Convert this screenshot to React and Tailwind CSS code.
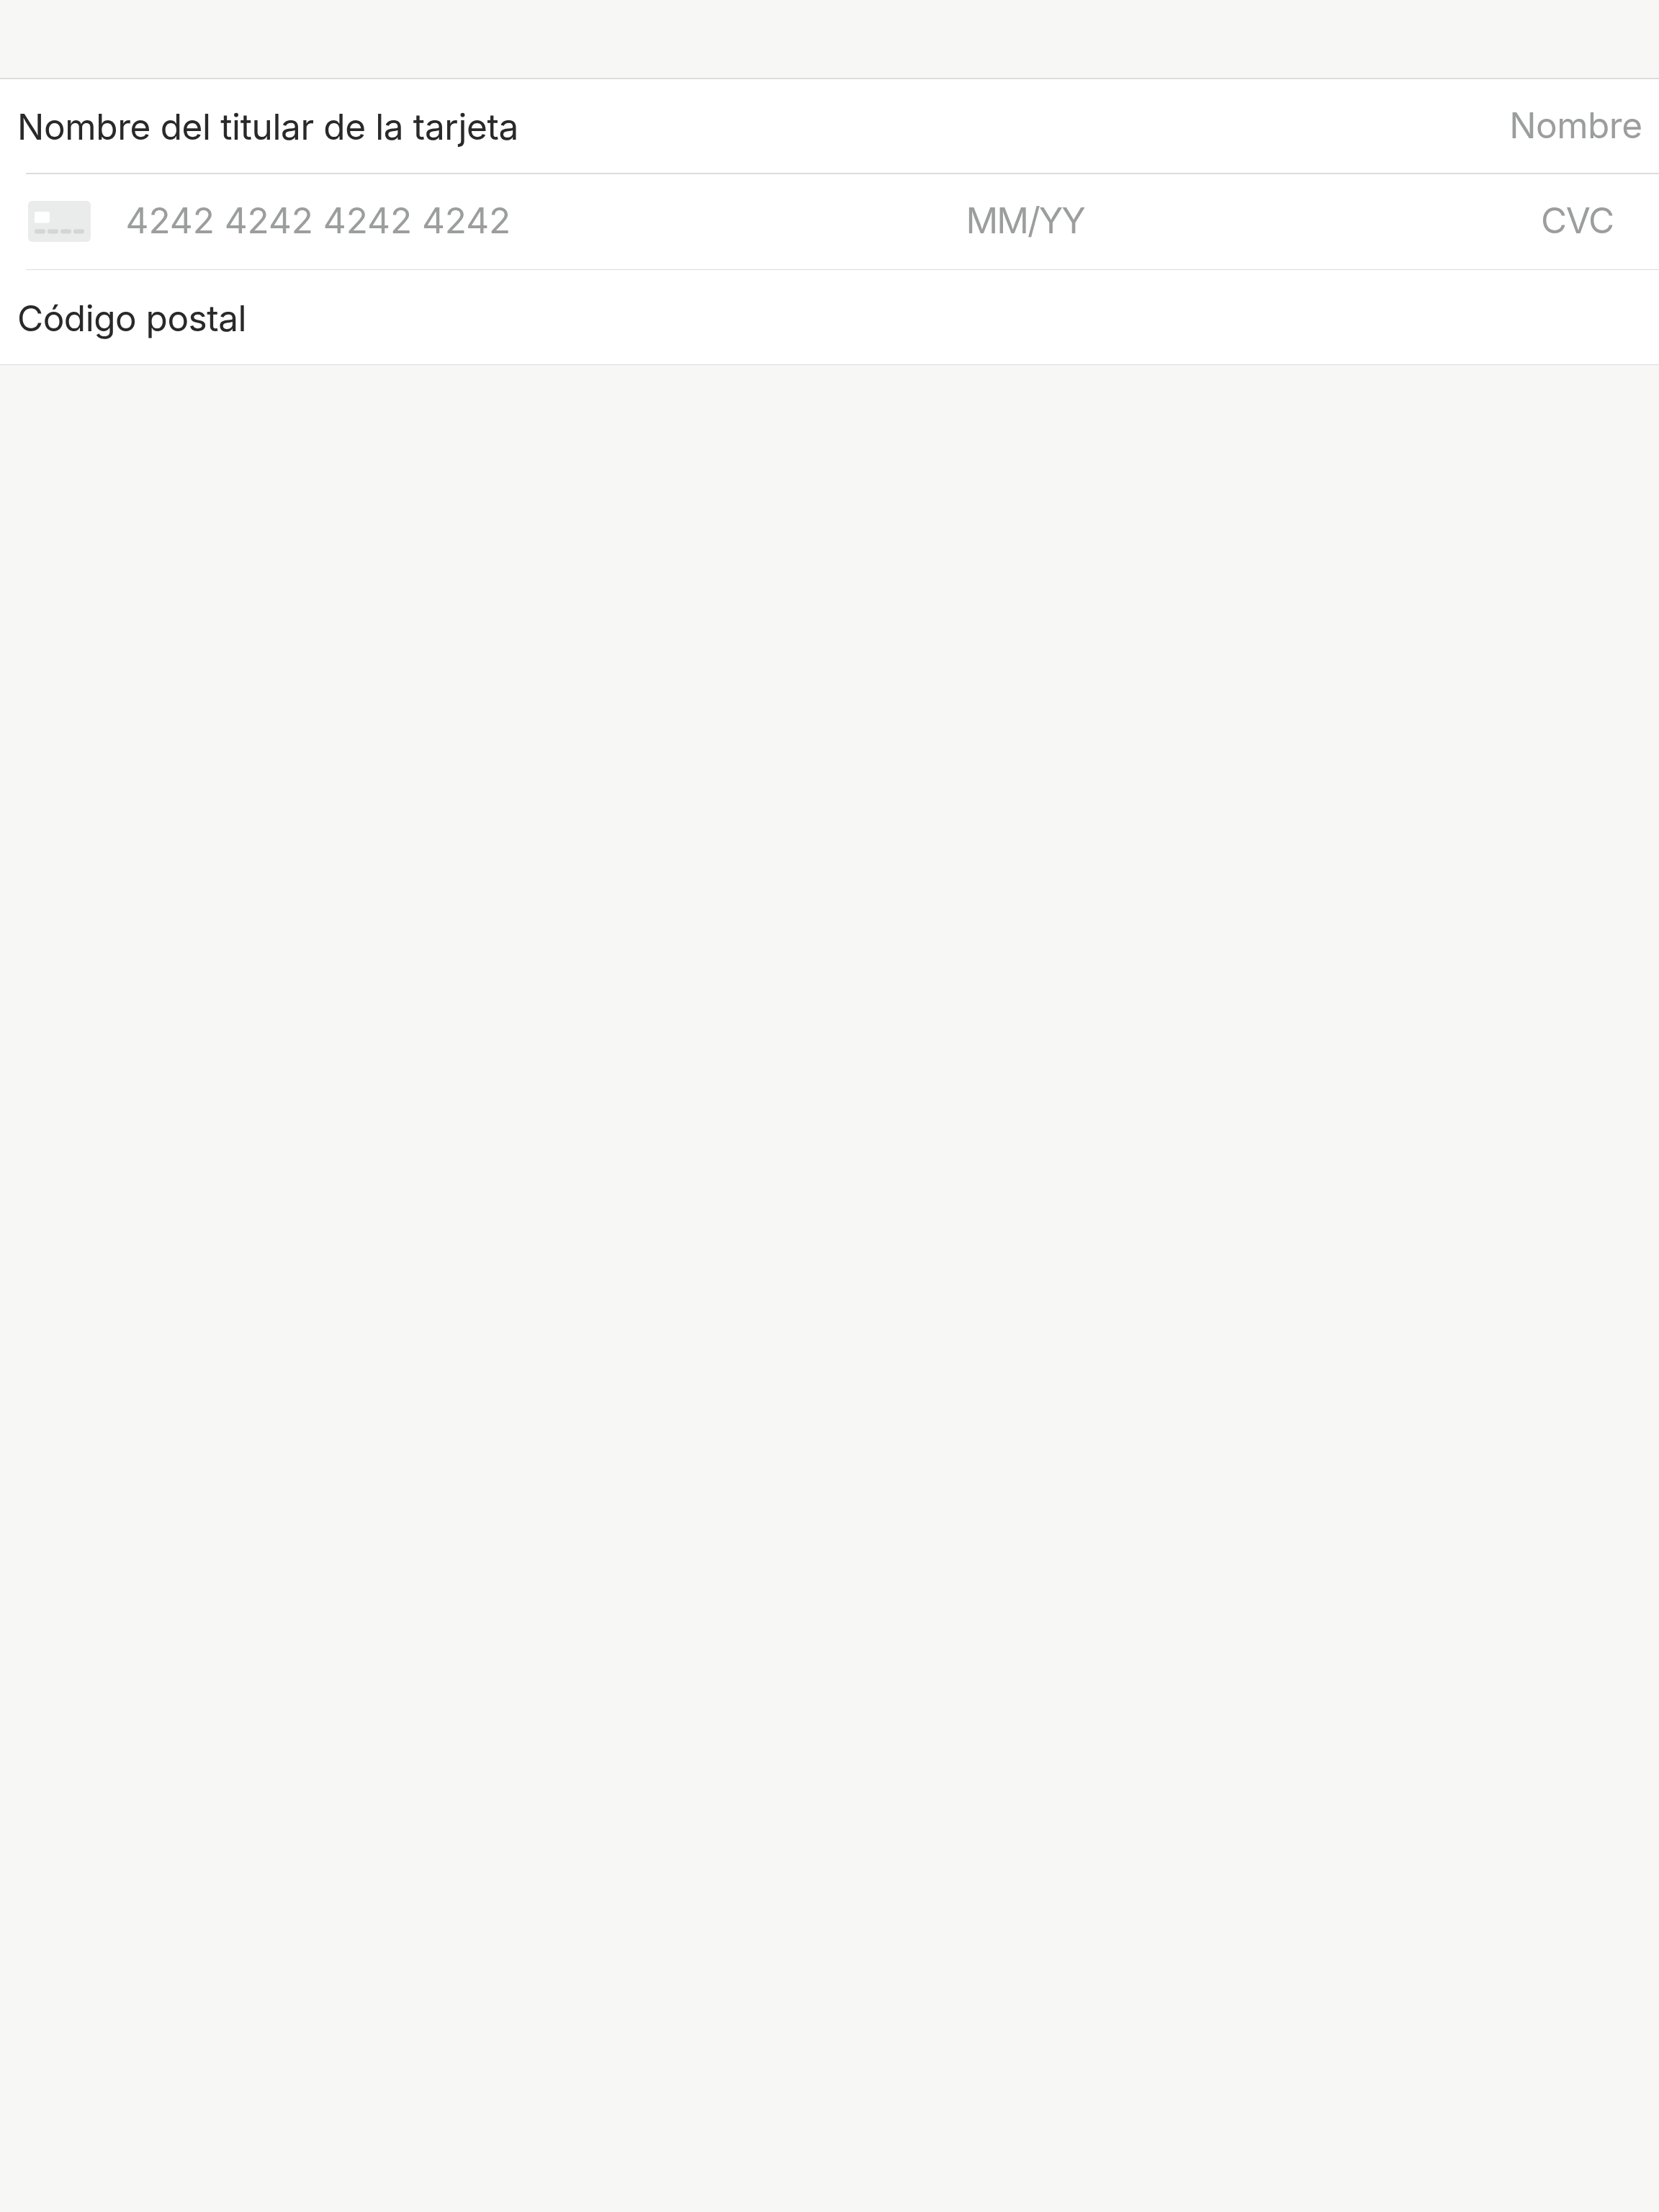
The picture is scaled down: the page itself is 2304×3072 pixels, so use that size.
import React from "react";

function CardIcon() {
  return (
    <svg className="block h-[57px] w-[87px] shrink-0" viewBox="0 0 87 57" fill="none" aria-hidden="true">
      <rect width="87" height="57" rx="6" fill="#eaeceb" />
      <rect x="9" y="15" width="21" height="15.5" rx="2" fill="#fff" />
      {[9, 27, 45, 63].map((x) => (
        <rect key={x} x={x} y="39.2" width="15" height="6.4" rx="3" fill="#d4d6d5" />
      ))}
    </svg>
  );
}

export default function App() {
  return (
    <main className="min-h-[3072px] w-full bg-[#f7f7f5] pt-[108px] font-[Inter,sans-serif] text-[49.5px] leading-[60px] whitespace-nowrap text-[#292929]">
      <form className="flex w-full flex-col border-t-2 border-b border-[#dcdcdc] bg-white">
        <div className="flex h-[130px] items-start justify-between pr-[23.5px] pl-6">
          <label className="pt-9 tracking-[-0.37px]">Nombre del titular de la tarjeta</label>
          <span className="pt-[34px] tracking-[-0.5px] text-[#9b9e9d]">Nombre</span>
        </div>

        <div className="ml-9 h-0.5 bg-[#dcdcdc]" />

        <div className="flex h-[132px] items-start pl-[39px] text-[#9b9e9d]">
          <div className="pt-[37px]">
            <CardIcon />
          </div>
          <span className="ml-[48.5px] w-[1167px] pt-[34px] tracking-[-0.07px]">4242 4242 4242 4242</span>
          <span className="w-[798.5px] pt-[34px] tracking-[-2px]">MM/YY</span>
          <span className="pt-[34px] tracking-[-1.3px]">CVC</span>
        </div>

        <div className="ml-9 h-px bg-[#dcdcdc]" />

        <div className="flex h-[131px] items-start pl-6">
          <label className="pt-[37px] tracking-[-0.5px]">Código postal</label>
        </div>
      </form>
    </main>
  );
}
